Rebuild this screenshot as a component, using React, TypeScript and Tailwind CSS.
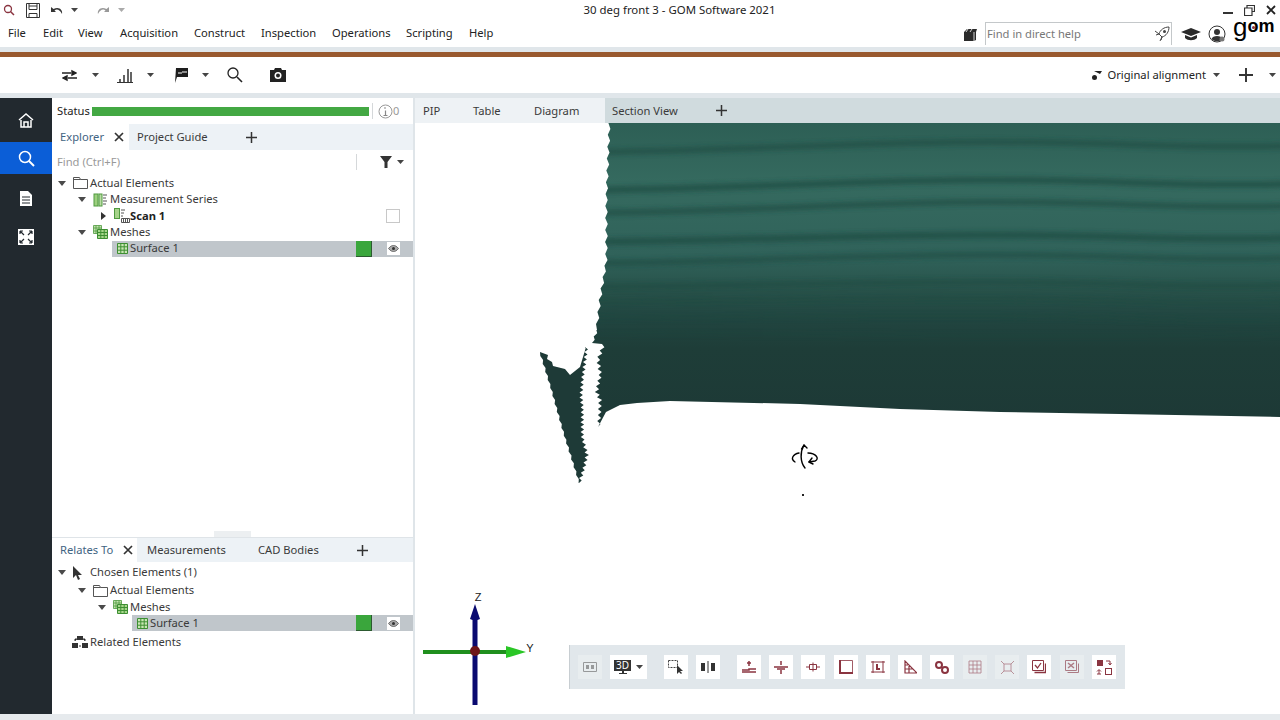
import React from "react";

const menus = [
  ["File", "w-[35px]"],
  ["Edit", "w-[35px]"],
  ["View", "w-[42px]"],
  ["Acquisition", "w-[74px]"],
  ["Construct", "w-[67px]"],
  ["Inspection", "w-[71px]"],
  ["Operations", "w-[74px]"],
  ["Scripting", "w-[63px]"],
  ["Help", "w-[40px]"],
];

// dark creases running across the scanned surface: y at left, middle, right
const creases = [
  [152, 142, 146, 5, 0.7],
  [190, 180, 184, 6, 0.75],
  [213, 202, 206, 5, 0.75],
  [242, 235, 238, 6, 0.75],
  [263, 255, 258, 5, 0.7],
  [287, 282, 285, 5, 0.6],
  [302, 299, 302, 4, 0.5],
  [318, 316, 320, 4, 0.4],
  [334, 336, 334, 3, 0.3],
];

// turns a polyline into a ragged edge, teeth going sideways
function jag(pts: number[][], step: number, amp: number) {
  let d = "";
  let n = 0;
  for (let i = 0; i < pts.length - 1; i++) {
    const [x1, y1] = pts[i];
    const [x2, y2] = pts[i + 1];
    const count = Math.max(1, Math.round(Math.abs(y2 - y1) / step));
    for (let k = 0; k < count; k++) {
      const t = k / count;
      const off = (n % 2 ? 1 : -1) * amp * (0.4 + 0.6 * Math.abs(Math.sin(n * 1.7)));
      d += `L${(x1 + (x2 - x1) * t + off).toFixed(1)} ${(y1 + (y2 - y1) * t).toFixed(1)} `;
      n++;
    }
  }
  const last = pts[pts.length - 1];
  return d + `L${last[0]} ${last[1]} `;
}

const meshPath =
  "M609 123 " +
  jag([[609, 123], [607, 200], [606, 260], [600, 300], [597, 330]], 6, 1.6) +
  jag([[597, 330], [592, 343]], 3, 1.5) +
  jag([[603, 344], [598, 360], [601, 375], [597, 392], [600, 400], [598, 427]], 3, 2.4) +
  "L606 412 L620 405 L637 403 L670 401 L800 404 L900 409 L1000 412 L1120 414 L1280 417 V123z";

const wedgePath =
  "M540 352 L548 355 L547 359 L552 362 L553 366 L565 369 L570 375 L580 367 L586 347 " +
  jag([[586, 347], [584, 372], [581, 395], [583, 437], [587, 455], [579, 483]], 2.5, 2.2) +
  jag([[579, 483], [560, 420], [540, 352]], 4, 1) +
  "z";

function Caret({ className = "", color = "#444" }: { className?: string; color?: string }) {
  return (
    <svg width="7" height="4" viewBox="0 0 7 4" className={className}>
      <path d="M0 0h7L3.500 4z" fill={color} />
    </svg>
  );
}

function TreeArrow({ open = true }: { open?: boolean }) {
  return open ? (
    <svg width="8" height="5" viewBox="0 0 8 5" className="shrink-0">
      <path d="M0 0h8L4 5z" fill="#4a4a4a" />
    </svg>
  ) : (
    <svg width="5" height="8" viewBox="0 0 5 8" className="shrink-0 mx-[1.5px]">
      <path d="M0 0v8l5-4z" fill="#333" />
    </svg>
  );
}

function FolderIcon() {
  return (
    <svg width="15" height="12" viewBox="0 0 15 12" className="shrink-0">
      <path d="M.5 11.500v-11h6l1 2h7v9z M.5 2.500h7" fill="none" stroke="#555" />
    </svg>
  );
}

function SeriesIcon() {
  return (
    <svg width="15" height="14" viewBox="0 0 15 14" className="shrink-0">
      <rect x="1" y="1" width="4" height="12" fill="#9ccf7f" stroke="#4f9a3f" />
      <rect x="6" y="1" width="3" height="12" fill="#b9dca4" stroke="#4f9a3f" />
      <path d="M10 2h4M10 5h3M10 8h4M10 11h3" stroke="#555" />
    </svg>
  );
}

function ScanIcon() {
  return (
    <svg width="16" height="15" viewBox="0 0 16 15" className="shrink-0">
      <rect x=".5" y=".5" width="5" height="10" fill="#a6d38a" stroke="#4f9a3f" />
      <path d="M7 2h4M7 5h3M7 8h2" stroke="#555" />
      <path d="M7.500 10.500h8v4h-8zM9.500 10.500v4M11.500 10.500v4M13.500 10.500v4" fill="none" stroke="#555" />
    </svg>
  );
}

function MeshesIcon() {
  return (
    <svg width="15" height="14" viewBox="0 0 15 14" className="shrink-0">
      <path d="M.5.5h8v8h-8zM3 .5v8M6 .5v8M.5 3h8M.5 6h8" fill="#c4e3ae" stroke="#4f9a3f" strokeWidth=".8" />
      <path d="M4.500 4.500h10v9h-10zM7.800 4.500v9M11.200 4.500v9M4.500 7.500h10M4.500 10.500h10" fill="#a8d78c" stroke="#3d8f32" />
    </svg>
  );
}

function GridIcon() {
  return (
    <svg width="11" height="11" viewBox="0 0 11 11" className="shrink-0">
      <path d="M.5.5h10v10H.5zM3.800.5v10M7.200.5v10M.5 3.800h10M.5 7.200h10" fill="#c9e6b4" stroke="#3d8f32" />
    </svg>
  );
}

function Eye() {
  return (
    <div className="w-[13px] h-[13px] bg-white flex items-center justify-center">
      <svg width="11" height="7" viewBox="0 0 11 7">
        <path d="M.5 3.500C2.500 1 4 .5 5.500.5S8.500 1 10.500 3.500C8.500 6 7 6.500 5.500 6.500S2.500 6 .5 3.500z" fill="#aaa" stroke="#555" strokeWidth=".8" />
        <circle cx="5.500" cy="3.500" r="1.500" fill="#333" />
      </svg>
    </div>
  );
}

function Swatch() {
  return <div className="w-4 h-full bg-[#3aa63c] border-r border-b border-[#2c5a30]" />;
}

function Close({ className = "" }: { className?: string }) {
  return (
    <svg width="10" height="10" viewBox="0 0 10 10" className={className}>
      <path d="M1 1l8 8M9 1l-8 8" stroke="#333" strokeWidth="1.700" />
    </svg>
  );
}

function Plus({ size = 11 }: { size?: number }) {
  return (
    <svg width={size} height={size} viewBox="0 0 11 11">
      <path d="M5.500 0v11M0 5.500h11" stroke="#333" strokeWidth="1.500" />
    </svg>
  );
}

function ToolIcon({ children, dim, className = "w-6" }: { children: React.ReactNode; dim?: boolean; className?: string }) {
  return (
    <div className={`h-6 shrink-0 flex items-center justify-center ${className} ${dim ? "bg-[#eef1f3] opacity-60" : "bg-white"}`}>
      {children}
    </div>
  );
}

const maroon = "#8a3440";

function ViewportDrawing() {
  return (
    <svg viewBox="415 123 865 591" className="w-full h-full block">
      <defs>
        <linearGradient id="mesh" x1="0" y1="123" x2="0" y2="420" gradientUnits="userSpaceOnUse">
          <stop offset="0" stopColor="#2d5f55" />
          <stop offset=".2" stopColor="#356a5f" />
          <stop offset=".45" stopColor="#30625a" />
          <stop offset=".56" stopColor="#28524a" />
          <stop offset=".66" stopColor="#214540" />
          <stop offset=".76" stopColor="#1e3d38" />
          <stop offset="1" stopColor="#1d3936" />
        </linearGradient>
        <clipPath id="meshClip">
          <path d={meshPath} />
        </clipPath>
        <filter id="soft" x="-5%" y="-200%" width="110%" height="500%">
          <feGaussianBlur stdDeviation="2.500" />
        </filter>
      </defs>
      <path d={meshPath} fill="url(#mesh)" />
      <g clipPath="url(#meshClip)">
        {creases.map(([l, m, r, w, o]) => (
          <path
            key={l}
            d={`M590 ${l}C760 ${l - 2} 860 ${m} 990 ${m}S1180 ${r + 3} 1290 ${r}`}
            fill="none"
            stroke="#1d4a41"
            strokeWidth={w}
            opacity={o}
            filter="url(#soft)"
          />
        ))}
      </g>
      <path d={wedgePath} fill="#1e3a37" />
      <g fill="none" stroke="#000" strokeWidth="1.400" strokeLinecap="round" strokeLinejoin="round">
        <path d="M805 468C800 462 800 452 804 445" />
        <path d="M801.500 449l2.500-4 3 3" />
        <path d="M799 453C793 454 790 459 795 462" />
        <path d="M808 453C816 453 820 459 815 461L809 462" />
        <path d="M812 458l-3 4 4 2" />
      </g>
      <rect x="802" y="494" width="2" height="2" fill="#222" />
      <path d="M472.500 705V620l-2.500-1 5-15 5 15-2.500 1v85z" fill="#0a0a70" />
      <path d="M423 650h83v4h-83z" fill="#1f8f1d" />
      <path d="M506 646l20 6-20 6z" fill="#2ac626" />
      <circle cx="475" cy="651" r="5" fill="#6d1418" />
      <text x="478" y="601" fontSize="11" textAnchor="middle" fill="#222" fontFamily="Liberation Sans, sans-serif">Z</text>
      <text x="530" y="652" fontSize="11" textAnchor="middle" fill="#222" fontFamily="Liberation Sans, sans-serif">Y</text>
    </svg>
  );
}

export default function App() {
  return (
    <div className="w-[1280px] h-[720px] overflow-hidden flex flex-col bg-white text-[11.2px] text-[#3a3a3a]" style={{ fontFamily: '"Noto Sans", sans-serif' }}>
      {/* title bar */}
      <div className="h-5 shrink-0 flex items-center relative">
        <div className="flex items-center pl-[3px] gap-[9px]">
          <svg width="12" height="12" viewBox="0 0 12 12">
            <circle cx="5" cy="5" r="3.500" fill="none" stroke="#8a3440" strokeWidth="1.300" />
            <path d="M7.500 7.500L11 11" stroke="#8a3440" strokeWidth="1.500" />
          </svg>
          <svg width="14" height="15" viewBox="0 0 14 15" className="ml-[2px]">
            <path d="M.5.5h13v14H.5zM3 .5v6h8v-6M3 3h8M3 14.500v-4h8v4" fill="none" stroke="#333" />
          </svg>
          <svg width="12" height="9" viewBox="0 0 12 9" className="ml-[2px]">
            <path d="M0 1v5h5L3.500 4.500C6 2.500 9 4 11 8c1-4-3-8-8.500-5z" fill="#333" />
          </svg>
          <Caret className="-ml-[1px]" />
          <svg width="12" height="9" viewBox="0 0 12 9" className="ml-[10px]">
            <path d="M12 1v5H7l1.500-1.500C6 2.500 3 4 1 8 0 4 4 0 9.500 3z" fill="#999" />
          </svg>
          <Caret color="#aaa" />
        </div>
        <div className="absolute left-0 right-0 text-center pl-[79px] text-[11.4px] text-[#222]">30 deg front 3 - GOM Software 2021</div>
        <div className="ml-auto flex items-center gap-[11px] pr-[4px]">
          <div className="w-[10px] h-[2px] bg-[#333] mt-[6px]" />
          <svg width="11" height="11" viewBox="0 0 11 11">
            <path d="M3 2.500V.5h7.500v6H8M.5 3h7.500v7.500H.5z" fill="none" stroke="#333" strokeWidth="1.200" />
          </svg>
          <svg width="10" height="10" viewBox="0 0 10 10">
            <path d="M1 1l8 8M9 1l-8 8" stroke="#222" strokeWidth="1.800" />
          </svg>
        </div>
      </div>

      {/* menu bar */}
      <div className="h-[27px] shrink-0 flex items-center pl-2">
        {menus.map(([m, w]) => (
          <div key={m} className={`${w} text-[#222]`}>{m}</div>
        ))}
        <div className="ml-auto flex items-center h-full">
          <svg width="14" height="14" viewBox="0 0 14 14" className="mr-[7px]">
            <path d="M0 5l3-3h10l-1 3v8l-2 1H0z" fill="#2a2a2a" />
            <path d="M4 2l-2 3M8 2L6 5M10 5v9" stroke="#fff" strokeWidth=".8" />
          </svg>
          <div className="w-[187px] h-[23px] mt-[2px] self-start border-t border-l border-r border-[#c4c8ca] flex items-center justify-between pl-[1px] pr-[1px]">
            <span className="text-[#777]">Find in direct help</span>
            <svg width="16" height="16" viewBox="0 0 16 16">
              <path d="M15 1C10 1 6 4 5 8l3 3c4-1 7-5 7-10zM5 8l-3 1M8 11l-1 3M1 5l4 3M6 15l2-4" fill="none" stroke="#444" />
              <circle cx="10.500" cy="5.500" r="1.500" fill="#444" />
            </svg>
          </div>
          <svg width="20" height="14" viewBox="0 0 20 14" className="ml-[9px]">
            <path d="M10 1L20 5l-10 4L0 5z" fill="#2a2a2a" />
            <path d="M4 8v3c3 3 9 3 12 0V8l-6 2.500z" fill="#2a2a2a" />
          </svg>
          <svg width="18" height="18" viewBox="0 0 18 18" className="ml-[7px]">
            <circle cx="9" cy="9" r="8" fill="none" stroke="#333" />
            <circle cx="9" cy="7" r="3" fill="#333" />
            <path d="M3.500 14c1-4 10-4 11 0-3 3-8 3-11 0z" fill="#333" />
            <circle cx="14" cy="14" r="2.500" fill="#777" />
          </svg>
          <div className="ml-[7px] flex items-start text-black w-[47px] h-[33px] -mt-[6px] self-start relative" style={{ fontFamily: '"Liberation Sans", sans-serif' }}>
            <span className="text-[26px] leading-[26px]">g</span>
            <span className="text-[18px] leading-[18px] font-bold mt-[3px]">om</span>
            <div className="absolute left-[19px] top-[12px] w-[3px] h-[3px] rounded-full bg-[#8a3440]" />
          </div>
        </div>
      </div>

      <div className="h-[5px] shrink-0 bg-[#e0e6ea]" />
      <div className="h-[5px] shrink-0 bg-[#99592f]" />

      {/* toolbar */}
      <div className="h-9 shrink-0 flex items-center">
        <div className="flex items-center pl-[62px]">
          <svg width="15" height="13" viewBox="0 0 15 13">
            <path d="M0 4h9M10 2v4l4-2zM15 9H6M5 7v4l-4-2z" stroke="#222" strokeWidth="1.400" fill="#222" />
          </svg>
          <Caret className="ml-[14.500px]" />
          <svg width="16" height="15" viewBox="0 0 16 15" className="ml-[18.500px]">
            <path d="M0 14.500h16" stroke="#333" />
            <path d="M3 14v-3M7 14V7M11 14V1M14 14V4" stroke="#333" strokeWidth="1.500" />
          </svg>
          <Caret className="ml-[13.500px]" />
          <svg width="15" height="16" viewBox="0 0 15 16" className="ml-[19px]">
            <path d="M2 16L3 1h12v9H4z" fill="#1d1d1d" />
            <path d="M5 6h4M9 5h5" stroke="#fff" />
          </svg>
          <Caret className="ml-[14px]" />
          <svg width="16" height="16" viewBox="0 0 16 16" className="ml-[18.500px]">
            <circle cx="6" cy="6" r="5" fill="none" stroke="#222" strokeWidth="1.300" />
            <path d="M10 10l5 5" stroke="#222" strokeWidth="1.600" />
          </svg>
          <svg width="16" height="14" viewBox="0 0 16 14" className="ml-[27px]">
            <path d="M0 2h4l1-2h6l1 2h4v12H0z" fill="#222" />
            <circle cx="8" cy="7.500" r="3.500" fill="#fff" />
            <circle cx="8" cy="7.500" r="2" fill="#222" />
          </svg>
        </div>
        <div className="ml-auto flex items-center pr-[4.500px]">
          <svg width="10" height="10" viewBox="0 0 10 10" className="mr-[5px]">
            <path d="M2 1h8L8 4z" fill="#222" />
            <circle cx="2.500" cy="7.500" r="2.500" fill="#222" />
          </svg>
          <span className="text-[#222]">Original alignment</span>
          <Caret className="ml-[6.500px]" />
          <div className="ml-[19.500px]"><Plus size={14} /></div>
          <Caret className="ml-[15.500px]" />
        </div>
      </div>
      <div className="h-[5px] shrink-0 bg-[#e0e6ea]" />

      {/* main */}
      <div className="flex-1 min-h-0 flex">
        {/* nav rail */}
        <div className="w-[52px] shrink-0 bg-[#22292f] flex flex-col items-center">
          <div className="h-11 w-full flex items-center justify-center">
            <svg width="16" height="15" viewBox="0 0 16 15">
              <path d="M1 7L8 1l7 6M3 7v7h10V7M6 14V9h4v5" fill="none" stroke="#fff" strokeWidth="1.500" />
            </svg>
          </div>
          <div className="h-8 w-full bg-[#0b5ed7] flex items-center justify-center">
            <svg width="17" height="17" viewBox="0 0 17 17">
              <circle cx="7" cy="7" r="5.500" fill="none" stroke="#fff" strokeWidth="1.500" />
              <path d="M11 11l5 5" stroke="#fff" strokeWidth="2" />
            </svg>
          </div>
          <div className="h-12 flex items-center justify-center">
            <svg width="12" height="15" viewBox="0 0 12 15">
              <path d="M0 0h8l4 4v11H0z" fill="#fff" />
              <path d="M2 6h8M2 9h8M2 12h8" stroke="#22292f" />
            </svg>
          </div>
          <div className="h-[30px] flex items-center justify-center">
            <svg width="16" height="16" viewBox="0 0 16 16">
              <rect width="16" height="16" fill="#fff" />
              <path d="M2 2l4 4M2 2h3M2 2v3M14 2l-4 4M14 2h-3M14 2v3M2 14l4-4M2 14h3M2 14v-3M14 14l-4-4M14 14h-3M14 14v-3" stroke="#22292f" strokeWidth="1.200" />
            </svg>
          </div>
        </div>

        {/* left panels */}
        <div className="w-[361px] shrink-0 flex flex-col">
          <div className="flex-1 min-h-0 flex flex-col">
            <div className="h-[26px] shrink-0 flex items-center pl-[5px]">
              <span className="w-[35px] text-[#222]">Status</span>
              <div className="w-[277px] h-[9px] bg-[#43a843]" />
              <div className="w-px h-4 bg-[#d5d8da] ml-[3px]" />
              <svg width="15" height="15" viewBox="0 0 15 15" className="ml-[5px]">
                <circle cx="7.500" cy="7.500" r="6.500" fill="none" stroke="#999" />
                <path d="M6 4h2M7.500 6.500v5M5.500 11.500h4" stroke="#888" strokeWidth="1.200" />
              </svg>
              <span className="text-[#999] text-[11px]">0</span>
            </div>
            <div className="h-[26px] shrink-0 flex items-center bg-[#edf2f6]">
              <div className="w-[77px] h-full bg-white flex items-center pl-[8px] relative">
                <span className="text-[#3f6482]">Explorer</span>
                <Close className="absolute left-[62px] top-[8px]" />
              </div>
              <span className="ml-[8px] w-[109px]">Project Guide</span>
              <Plus />
            </div>
            <div className="h-6 shrink-0 flex items-center pl-[5px]">
              <span className="w-[299px] text-[#999]">Find (Ctrl+F)</span>
              <div className="w-px h-[16px] bg-[#d5d8da]" />
              <svg width="12" height="12" viewBox="0 0 12 12" className="ml-[23px]">
                <path d="M0 0h12L7.500 6v6h-3V6z" fill="#333" />
              </svg>
              <Caret className="ml-[5px]" />
            </div>
            <div className="flex flex-col pt-[1px]">
              <div className="h-[16.400px] flex items-center pl-[6px] gap-[7px]">
                <TreeArrow />
                <FolderIcon />
                <span className="-ml-[5px]">Actual Elements</span>
              </div>
              <div className="h-[16.400px] flex items-center pl-[26px] gap-[7px]">
                <TreeArrow />
                <SeriesIcon />
                <span className="-ml-[5px]">Measurement Series</span>
              </div>
              <div className="h-[16.400px] flex items-center pl-[47px] gap-[7px] relative">
                <TreeArrow open={false} />
                <ScanIcon />
                <span className="-ml-[7px] font-bold text-[#222]">Scan 1</span>
                <div className="absolute left-[334px] top-[1px] w-[14px] h-[14px] border border-[#c8c8c8]" />
              </div>
              <div className="h-[16.400px] flex items-center pl-[26px] gap-[7px]">
                <TreeArrow />
                <MeshesIcon />
                <span className="-ml-[5px]">Meshes</span>
              </div>
              <div className="ml-[60px] h-4 bg-[#c0c6cb] flex items-center pl-[5px] gap-[2px]">
                <GridIcon />
                <span>Surface 1</span>
                <div className="ml-auto h-full flex items-center">
                  <Swatch />
                  <div className="ml-[15px] mr-[13px]"><Eye /></div>
                </div>
              </div>
            </div>
            <div className="mt-auto self-center w-[37px] h-[6px] bg-[#eceff1]" />
          </div>

          <div className="h-[177px] shrink-0 flex flex-col border-t border-[#dfe4e8]">
            <div className="h-6 shrink-0 flex items-center bg-[#edf2f6]">
              <div className="w-[85px] h-full bg-white flex items-center pl-[8px] relative">
                <span className="text-[#3f6482]">Relates To</span>
                <Close className="absolute left-[71px] top-[7px]" />
              </div>
              <span className="ml-[10px] w-[111px]">Measurements</span>
              <span className="w-[99px]">CAD Bodies</span>
              <Plus />
            </div>
            <div className="flex flex-col pt-[1px]">
              <div className="h-[19px] flex items-center pl-[6px] gap-[6px]">
                <TreeArrow />
                <svg width="11" height="14" viewBox="0 0 11 14" className="shrink-0">
                  <path d="M1 0v12l3-3 2 5 2-1-2-4h4z" fill="#333" />
                </svg>
                <span className="pl-[1px]">Chosen Elements (1)</span>
              </div>
              <div className="h-[17px] flex items-center pl-[26px] gap-[7px]">
                <TreeArrow />
                <FolderIcon />
                <span className="-ml-[5px]">Actual Elements</span>
              </div>
              <div className="h-4 flex items-center pl-[46px] gap-[7px]">
                <TreeArrow />
                <MeshesIcon />
                <span className="-ml-[5px]">Meshes</span>
              </div>
              <div className="ml-[80px] h-4 bg-[#c0c6cb] flex items-center pl-[5px] gap-[2px]">
                <GridIcon />
                <span className="pt-[1px]">Surface 1</span>
                <div className="ml-auto h-full flex items-center">
                  <Swatch />
                  <div className="ml-[15px] mr-[13px]"><Eye /></div>
                </div>
              </div>
              <div className="h-[21px] flex items-center pl-[20px] gap-[2px]">
                <svg width="16" height="12" viewBox="0 0 16 12" className="shrink-0">
                  <path d="M5 0h6v4H5zM0 7h6v5H0zM10 7h6v5h-6z" fill="#333" />
                  <path d="M3 5V3h2M13 5V3h-2M7 10h2" stroke="#333" />
                </svg>
                <span className="pt-[1px]">Related Elements</span>
              </div>
            </div>
          </div>
        </div>

        <div className="w-[2px] shrink-0 bg-[#dfe5e9]" />

        {/* 3d view */}
        <div className="flex-1 min-w-0 flex flex-col relative">
          <div className="h-[25px] shrink-0 flex items-center bg-[#eef2f5]">
            <div className="w-[190px] flex items-center pl-[8px] pt-[1px]">
              <span className="w-[50px]">PIP</span>
              <span className="w-[61px]">Table</span>
              <span>Diagram</span>
            </div>
            <div className="flex-1 h-full bg-[#d0dbde] flex items-center pl-[7px]">
              <span className="w-[104px] pt-[1px]">Section View</span>
              <Plus />
            </div>
          </div>
          <div className="flex-1 min-h-0">
            <ViewportDrawing />
          </div>
          <div className="absolute left-[154px] top-[547px] w-[556px] h-[44px] bg-[#e1e7eb] border-l border-[#c8ced2] flex items-center pl-[8px]">
            <ToolIcon dim>
              <svg width="14" height="10" viewBox="0 0 14 10"><path d="M.5.5h13v9H.5z" fill="none" stroke="#666" /><path d="M3 3h3v4H3zM8 3h3v4H8z" fill="#666" /></svg>
            </ToolIcon>
            <ToolIcon className="w-[37px] ml-[8px]">
              <div className="flex items-center gap-[5px]">
                <div className="flex flex-col items-center">
                  <div className="w-[17px] h-[11px] bg-[#333] text-white text-[10px] leading-[11px] text-center">3D</div>
                  <div className="w-[2px] h-[2px] bg-[#333]" />
                  <div className="w-2 h-[1px] bg-[#333]" />
                </div>
                <Caret />
              </div>
            </ToolIcon>
            <ToolIcon className="w-6 ml-[17px]">
              <svg width="16" height="14" viewBox="0 0 16 14"><path d="M.5.5h9v7h-9z" fill="none" stroke="#444" strokeDasharray="2 1" /><path d="M9 5v9l2-2 2 2 1-1-2-2h3z" fill="#333" /></svg>
            </ToolIcon>
            <ToolIcon className="w-6 ml-[8px]">
              <svg width="14" height="12" viewBox="0 0 14 12"><rect x="0" y="2" width="4" height="8" fill="#333" /><rect x="10" y="2" width="4" height="8" fill="#333" /><path d="M7 0v12" stroke="#333" /></svg>
            </ToolIcon>
            <ToolIcon className="w-6 ml-[17px]">
              <svg width="14" height="13" viewBox="0 0 14 13"><path d="M7 0v5M5 2h4M0 9h7v-1h7M0 11h14" stroke={maroon} strokeWidth="1.500" fill="none" /></svg>
            </ToolIcon>
            <div className="flex items-center gap-[8.300px] ml-[8px]">
              <ToolIcon>
                <svg width="14" height="13" viewBox="0 0 14 13"><path d="M7 0v4M7 9v4M0 6h14M3 8h8" stroke={maroon} strokeWidth="1.500" /></svg>
              </ToolIcon>
              <ToolIcon>
                <svg width="14" height="10" viewBox="0 0 14 10"><path d="M3.500 2.500h7v5h-7zM7 .5v9M0 5h3M11 5h3" fill="none" stroke={maroon} /></svg>
              </ToolIcon>
              <ToolIcon>
                <svg width="14" height="14" viewBox="0 0 14 14"><path d="M1 .5h12.500V13H1z" fill="none" stroke={maroon} strokeWidth=".8" /><path d="M1 0v13h13" fill="none" stroke={maroon} strokeWidth="2" /></svg>
              </ToolIcon>
              <ToolIcon>
                <svg width="14" height="14" viewBox="0 0 14 14"><path d="M2 1v12M12 1v12M0 2h14M0 12h14" stroke={maroon} /><path d="M5 4v6h4V8H7V4z" fill={maroon} /></svg>
              </ToolIcon>
              <ToolIcon>
                <svg width="14" height="14" viewBox="0 0 14 14"><path d="M2 1v12h12zM2 9h8M2 5h3M6 13V6" fill="none" stroke={maroon} strokeWidth="1.200" /></svg>
              </ToolIcon>
              <ToolIcon>
                <svg width="14" height="13" viewBox="0 0 14 13"><circle cx="4" cy="4" r="3" fill="none" stroke={maroon} strokeWidth="2" /><circle cx="10" cy="9" r="3" fill="none" stroke={maroon} strokeWidth="2" /></svg>
              </ToolIcon>
              <ToolIcon dim>
                <svg width="14" height="14" viewBox="0 0 14 14"><path d="M1 1h12v12H1zM5 1v12M9 1v12M1 5h12M1 9h12" fill="none" stroke={maroon} strokeWidth=".8" /></svg>
              </ToolIcon>
              <ToolIcon dim>
                <svg width="13" height="13" viewBox="0 0 13 13"><path d="M3 3h7v7H3zM0 0l3 3M13 0l-3 3M0 13l3-3M13 13l-3-3" fill="none" stroke={maroon} strokeWidth=".8" /></svg>
              </ToolIcon>
              <ToolIcon>
                <svg width="14" height="14" viewBox="0 0 14 14"><path d="M.5.5h11v10H.5z" fill="none" stroke={maroon} /><path d="M2.500 12.500h11v-9M3 5l2.500 3L9 3" fill="none" stroke={maroon} strokeWidth="1.300" /></svg>
              </ToolIcon>
              <ToolIcon dim>
                <svg width="14" height="14" viewBox="0 0 14 14"><path d="M.5.5h11v10H.5zM2.500 12.500h11v-9" fill="none" stroke={maroon} /><path d="M3 3l6 5M9 3L3 8" stroke={maroon} strokeWidth="1.500" /></svg>
              </ToolIcon>
              <ToolIcon>
                <svg width="16" height="16" viewBox="0 0 16 16"><rect x="1" y="1" width="6" height="6" fill={maroon} /><path d="M10 2h4v3M12.500 4l1.500 2 1.500-2M3 11v4M1 12.500l2-2 2 2M1 15h4" stroke={maroon} fill="none" /><rect x="9.500" y="9.500" width="6" height="6" fill="none" stroke={maroon} /></svg>
              </ToolIcon>
            </div>
          </div>
        </div>
      </div>
      <div className="h-[6px] shrink-0 bg-[#e6eaed]" />
    </div>
  );
}
